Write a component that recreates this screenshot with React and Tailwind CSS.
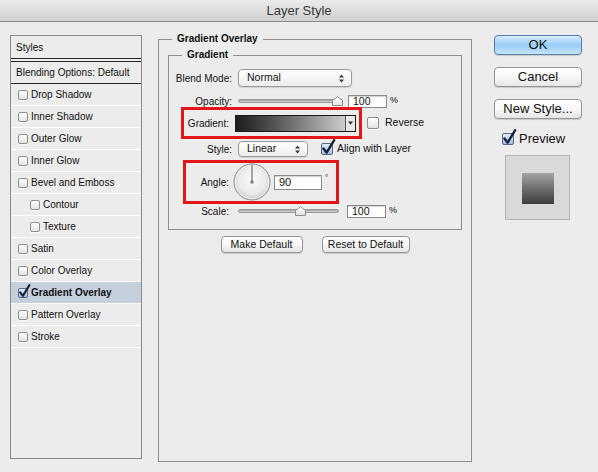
import React from "react";

const FONT = { fontFamily: '"Liberation Sans", Arial, sans-serif' };

function Box({ small = false }) {
  return (
    <span
      className={
        (small ? "w-[10px] h-[10px] " : "w-[12px] h-[12px] ") +
        "inline-block shrink-0 rounded-[2px] border border-[#8e8e8e] bg-linear-to-b from-[#ffffff] to-[#e4e4e4] shadow-[0_1px_0_rgba(255,255,255,0.8)]"
      }
    />
  );
}

function Checked({ small = false }) {
  return (
    <span
      className={
        (small ? "w-[10px] h-[10px] " : "w-[12px] h-[12px] ") +
        "relative inline-block shrink-0 rounded-[2px] border border-[#56698a] bg-linear-to-b from-[#e3ecf8] to-[#a6bddf]"
      }
    >
      <svg
        className="absolute -top-[5px] -left-[1px]"
        width={small ? 13 : 15}
        height={small ? 14 : 16}
        viewBox="0 0 15 16"
      >
        <path d="M2.5 9.5 L5.6 13.6 L13.2 1.2" stroke="#18233a" strokeWidth="2.4" fill="none" strokeLinecap="round" strokeLinejoin="round" />
      </svg>
    </span>
  );
}

function Arrows() {
  return (
    <svg width="5" height="9" viewBox="0 0 5 9">
      <path d="M0 3.6 L2.5 0.4 L5 3.6Z M0 5.4 L2.5 8.6 L5 5.4Z" fill="#3a3a3a" />
    </svg>
  );
}

function Select({ w, h, text }) {
  return (
    <div
      className={
        w +
        " " +
        h +
        " flex items-center justify-between pl-[8px] pr-[7px] rounded-[4px] border border-[#9b9b9b] bg-linear-to-b from-[#ffffff] to-[#ededed] shadow-[0_1px_1px_rgba(0,0,0,0.12)] text-[10.5px] text-[#111]"
      }
    >
      <span>{text}</span>
      <Arrows />
    </div>
  );
}

function Slider({ w, pos }) {
  return (
    <div className={w + " relative h-[11px]"}>
      <div className="absolute left-0 right-0 top-[3px] h-[4px] rounded-full border border-[#9a9a9a] bg-linear-to-b from-[#9c9c9c] to-[#dcdcdc]" />
      <svg className="absolute top-[0px]" style={{ left: pos - 5 }} width="11" height="10" viewBox="0 0 11 10">
        <defs>
          <linearGradient id="thumbg" x1="0" y1="0" x2="0" y2="1">
            <stop offset="0" stopColor="#ffffff" />
            <stop offset="1" stopColor="#e2e2e2" />
          </linearGradient>
        </defs>
        <path d="M0.5 4.6 L5.5 0.6 L10.5 4.6 V9.5 H0.5 Z" fill="url(#thumbg)" stroke="#8c8c8c" />
      </svg>
    </div>
  );
}

function Field({ w, text }) {
  return (
    <div
      className={
        w +
        " h-[13px] flex items-center pl-[4px] border border-[#8b8b8b] bg-white shadow-[inset_0_1px_1px_rgba(0,0,0,0.18)] text-[10.5px] text-[#111] leading-none"
      }
    >
      {text}
    </div>
  );
}

function Dial() {
  return (
    <svg width="38" height="38" viewBox="0 0 38 38" className="shrink-0">
      <defs>
        <radialGradient id="dialg" cx="0.5" cy="0.45" r="0.55">
          <stop offset="0" stopColor="#f8f8f8" />
          <stop offset="0.65" stopColor="#ececec" />
          <stop offset="1" stopColor="#cfcfcf" />
        </radialGradient>
      </defs>
      <circle cx="19" cy="19" r="18" fill="url(#dialg)" stroke="#8a8a8a" strokeWidth="1" />
      <circle cx="19" cy="19" r="16.8" fill="none" stroke="#ffffff" strokeOpacity="0.7" strokeWidth="0.8" />
      <line x1="19" y1="19" x2="19" y2="1.5" stroke="#5a5a5a" strokeWidth="1" />
      <rect x="17.5" y="17.5" width="3" height="3" fill="#7a7a7a" />
    </svg>
  );
}

function Button({ children, blue = false, w, h, cls = "" }) {
  return (
    <div
      className={
        w +
        " " +
        h +
        " flex items-center justify-center rounded-[4px] border " +
        (blue
          ? "border-[#5a7db2] bg-linear-to-b from-[#d6ebfd] via-[#99cdf7] to-[#c4e4fc] "
          : "border-[#949494] bg-linear-to-b from-[#ffffff] via-[#f7f7f7] to-[#e6e6e6] ") +
        "shadow-[0_1px_1px_rgba(0,0,0,0.15)] text-[#111] " +
        cls
      }
    >
      {children}
    </div>
  );
}

const rows = [
  { label: "Drop Shadow" },
  { label: "Inner Shadow" },
  { label: "Outer Glow" },
  { label: "Inner Glow" },
  { label: "Bevel and Emboss" },
  { label: "Contour", indent: true },
  { label: "Texture", indent: true },
  { label: "Satin" },
  { label: "Color Overlay" },
  { label: "Gradient Overlay", checked: true },
  { label: "Pattern Overlay" },
  { label: "Stroke" },
];

export default function App() {
  return (
    <div className="w-[598px] h-[472px] bg-[#ececec] overflow-hidden text-[10px] text-[#111] flex flex-col" style={FONT}>
      {/* Title bar */}
      <div className="h-[22px] shrink-0 flex items-center justify-center border-b border-[#8e8e8e] bg-linear-to-b from-[#ebebeb] to-[#cfcfcf] text-[13px] text-[#383838]">
        Layer Style
      </div>

      <div className="flex items-start">
        {/* Left styles panel */}
        <div className="ml-[10px] mt-[13px] w-[132px] h-[424px] border border-[#8c8c8c] bg-[#ececec] flex flex-col">
          <div className="h-[23px] flex items-center pl-[5px] border-b border-[#262626]">Styles</div>
          <div className="h-[2px]" />
          <div className="h-[23px] flex items-center pl-[5px] border-t border-b border-[#262626]">Blending Options: Default</div>
          {rows.map((r) => (
            <div
              key={r.label}
              className={
                "h-[22px] flex items-center border-b border-white " +
                (r.indent ? "pl-[19px] " : "pl-[7px] ") +
                (r.checked ? "bg-[#c6cfdc] font-bold" : "")
              }
            >
              {r.checked ? <Checked small /> : <Box small />}
              <span className="ml-[3px]">{r.label}</span>
            </div>
          ))}
        </div>

        {/* Main group */}
        <fieldset className="ml-[16px] mt-[11px] w-[313px] h-[429px] border border-[#8f8f8f] px-[9px] pb-0 m-0">
          <legend className="ml-[4px] px-[5px] font-bold leading-[12px] text-[10px]">Gradient Overlay</legend>

          <fieldset className="mt-[4px] w-[294px] border border-[#8f8f8f] p-0 m-0 pb-[11px] flex flex-col">
            <legend className="ml-[13px] px-[5px] font-bold leading-[12px] text-[10px]">Gradient</legend>

            {/* Blend mode */}
            <div className="mt-[8px] h-[18px] flex items-center">
              <div className="w-[63px] text-right">Blend Mode:</div>
              <div className="ml-[6px]">
                <Select w="w-[114px]" h="h-[18px]" text="Normal" />
              </div>
            </div>

            {/* Opacity */}
            <div className="mt-[8px] h-[12px] flex items-center">
              <div className="w-[63px] text-right">Opacity:</div>
              <div className="ml-[6px]">
                <Slider w="w-[105px]" pos={99} />
              </div>
              <div className="ml-[5px]">
                <Field w="w-[39px]" text="100" />
              </div>
              <span className="ml-[3px] text-[9px] self-start -mt-[1px]">%</span>
            </div>

            {/* Gradient row */}
            <div className="h-[32px] flex items-center">
              <div className="ml-[12px] w-[181px] h-[32px] shrink-0 border-[3px] border-[#e4141b] flex items-center">
                <div className="w-[45px] shrink-0 text-right">Gradient:</div>
                <div className="ml-[6px] w-[121px] h-[17px] shrink-0 border border-[#1c1c1c] flex">
                  <div className="flex-1 bg-linear-to-r from-[#1d1d1d] to-[#cdcdcd]" />
                  <div className="w-[10px] border-l border-[#555] bg-[#e8e8e8] flex items-center justify-center">
                    <svg width="5" height="4" viewBox="0 0 5 4">
                      <path d="M0 0.5 L5 0.5 L2.5 3.8Z" fill="#333" />
                    </svg>
                  </div>
                </div>
              </div>
              <div className="ml-[5px] flex items-center shrink-0">
                <Box />
                <span className="ml-[6px] text-[10.5px]">Reverse</span>
              </div>
            </div>

            {/* Style */}
            <div className="mt-[2px] h-[16px] flex items-center">
              <div className="w-[63px] text-right">Style:</div>
              <div className="ml-[6px]">
                <Select w="w-[70px]" h="h-[16px]" text="Linear" />
              </div>
              <div className="ml-[13px] flex items-center">
                <Checked />
                <span className="ml-[4px] text-[10.5px]">Align with Layer</span>
              </div>
            </div>

            {/* Angle red box */}
            <div className="mt-[3px] ml-[14px] w-[156px] h-[44px] border-[3px] border-[#e4141b] flex items-center">
              <div className="w-[43px] text-right">Angle:</div>
              <div className="ml-[4px]">
                <Dial />
              </div>
              <div className="ml-[3px]">
                <div className="w-[48px] h-[15px] flex items-center pl-[4px] border border-[#8b8b8b] bg-white shadow-[inset_0_1px_1px_rgba(0,0,0,0.18)] text-[11px] leading-none">
                  90
                </div>
              </div>
              <span className="ml-[3px] self-start mt-[9px] text-[8px]">°</span>
            </div>

            {/* Scale */}
            <div className="mt-[1px] h-[13px] flex items-center">
              <div className="w-[60px] text-right">Scale:</div>
              <div className="ml-[9px]">
                <Slider w="w-[101px]" pos={62} />
              </div>
              <div className="ml-[8px]">
                <Field w="w-[39px]" text="100" />
              </div>
              <span className="ml-[3px] text-[9px] self-start -mt-[1px]">%</span>
            </div>
          </fieldset>

          <div className="mt-[6px] flex justify-center gap-[19px] text-[10.5px]">
            <Button w="w-[82px]" h="h-[17px]">Make Default</Button>
            <Button w="w-[88px]" h="h-[17px]">Reset to Default</Button>
          </div>
        </fieldset>

        {/* Right column */}
        <div className="ml-[22px] mt-[13px] w-[88px] flex flex-col text-[13px]">
          <Button blue w="w-[88px]" h="h-[20px]">OK</Button>
          <Button w="w-[88px]" h="h-[20px]" cls="mt-[12px]">Cancel</Button>
          <Button w="w-[88px]" h="h-[20px]" cls="mt-[12px]">New Style...</Button>
          <div className="mt-[14px] ml-[8px] flex items-center h-[12px]">
            <Checked />
            <span className="ml-[5px] text-[13px]">Preview</span>
          </div>
          <div className="mt-[10px] ml-[11px] w-[65px] h-[65px] border border-[#b4b4b4] bg-[#d9d9d9] flex justify-center">
            <div className="mt-[17px] w-[32px] h-[31px] bg-linear-to-b from-[#a4a4a4] to-[#3d3d3d]" />
          </div>
        </div>
      </div>
    </div>
  );
}
